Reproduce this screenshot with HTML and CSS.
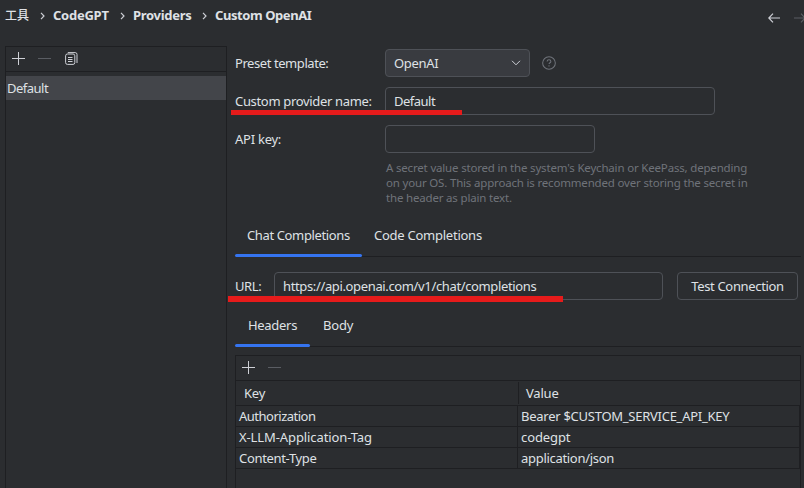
FILE: index.html
```html
<!DOCTYPE html>
<html lang="en">
<head>
<meta charset="utf-8">
<title>Custom OpenAI</title>
<link rel="stylesheet" href="styles.css">
</head>
<body>
<header class="topbar">
  <nav class="crumbs">
    <span class="crumb cjk">工具</span>
    <svg class="sep" viewBox="0 0 5 8"><path d="M1 .8 4 4 1 7.2"/></svg>
    <span class="crumb c2">CodeGPT</span>
    <svg class="sep" viewBox="0 0 5 8"><path d="M1 .8 4 4 1 7.2"/></svg>
    <span class="crumb c3">Providers</span>
    <svg class="sep" viewBox="0 0 5 8"><path d="M1 .8 4 4 1 7.2"/></svg>
    <span class="crumb c4">Custom OpenAI</span>
  </nav>
  <div class="history">
    <svg width="12" height="10" viewBox="0 0 12 10"><path d="M12 5H1M5 .7.8 5 5 9.3"/></svg>
    <svg class="off" width="12" height="10" viewBox="0 0 12 10"><path d="M0 5h11M7 .7 11.2 5 7 9.3"/></svg>
  </div>
</header>
<div class="content">
  <aside class="sidebar">
    <div class="tools">
      <svg width="13" height="13" viewBox="0 0 13 13"><path d="M6.5 0v13M0 6.5h13"/></svg>
      <svg class="off" width="13" height="13" viewBox="0 0 13 13"><path d="M0 6.5h13"/></svg>
      <svg class="copy" width="13" height="13" viewBox="0 0 13 13"><rect x=".6" y="2" width="9.2" height="10.4" rx="1.8"/><path d="M2.8.6h7.4a1.8 1.8 0 0 1 1.8 1.8V11M3 5.5h4.5M3 7.5h4.5M3 9.5h4.5"/></svg>
    </div>
    <div class="item"><span class="t-default">Default</span></div>
  </aside>
  <main class="main">
    <div class="row">
      <label class="label l1">Preset template:</label>
      <div class="combo"><span class="t-openai">OpenAI</span><svg width="10" height="6" viewBox="0 0 10 6"><path d="M1 .8 5 4.8 9 .8"/></svg></div>
      <svg class="help" width="14" height="14" viewBox="0 0 15 15"><circle cx="7.5" cy="7.5" r="6.8"/><path d="M5.5 6c0-1.2.8-2 2-2s2 .8 2 1.8c0 1.4-2 1.4-2 2.9"/><path d="M7.5 10v1.2"/></svg>
    </div>
    <div class="row marked">
      <label class="label l2">Custom provider name:</label>
      <div class="field name"><span class="t-default">Default</span></div>
      <i class="mark m1"></i>
    </div>
    <div class="row">
      <label class="label l3">API key:</label>
      <div class="field key"></div>
    </div>
    <p class="hint">A secret value stored in the system's Keychain or KeePass, depending<br>on your OS. This approach is recommended over storing the secret in<br>the header as plain text.</p>
    <div class="tabs outer"><div class="tab on"><span class="t-chat">Chat Completions</span></div><div class="tab"><span class="t-code">Code Completions</span></div></div>
    <div class="row url marked">
      <label class="t-url">URL:</label>
      <div class="field address"><span class="t-addr">https://api.openai.com/v1/chat/completions</span></div>
      <button class="button"><span class="t-test">Test Connection</span></button>
      <i class="mark m2"></i>
    </div>
    <div class="tabs inner"><div class="tab on"><span class="t-headers">Headers</span></div><div class="tab"><span class="t-body">Body</span></div></div>
    <section class="panel">
      <div class="tools">
        <svg width="13" height="13" viewBox="0 0 13 13"><path d="M6.5 0v13M0 6.5h13"/></svg>
        <svg class="off" width="13" height="13" viewBox="0 0 13 13"><path d="M0 6.5h13"/></svg>
      </div>
      <div class="thead"><div>Key</div><div>Value</div></div>
      <div class="tr"><div><span class="k1">Authorization</span></div><div><span class="v1">Bearer $CUSTOM_SERVICE_API_KEY</span></div></div>
      <div class="tr"><div><span class="k2">X-LLM-Application-Tag</span></div><div><span class="v2">codegpt</span></div></div>
      <div class="tr"><div><span class="k3">Content-Type</span></div><div><span class="v3">application/json</span></div></div>
    </section>
  </main>
</div>
</body>
</html>
```
FILE: styles.css
```css
* { box-sizing: border-box; }
body {
  margin: 0; width: 804px; height: 488px; overflow: hidden;
  background: #2b2d30; color: #dfe1e5;
  font: 13px/18px "Noto Sans", "Noto Sans CJK SC", sans-serif;
  white-space: nowrap;
}
svg { display: block; flex: none; fill: none; stroke: #ced0d6; }
.off { stroke: #5a5d63; }
.topbar { height: 46px; display: flex; justify-content: space-between; overflow: hidden; }
.crumbs { display: flex; align-items: center; height: 30px; padding-left: 5px; font-weight: 700; }
.crumb { flex: none; }
.cjk { width: 24px; font: 500 12px/18px "Noto Sans CJK SC", sans-serif; }
.sep { width: 5px; height: 8px; margin: 1px 8px 0 11px; stroke-width: 1.2; }
.c2 { width: 56px; letter-spacing: -.25px; }
.c3 { width: 58px; letter-spacing: -.3px; }
.c4 { letter-spacing: -.42px; }
.history { display: flex; gap: 14px; padding-top: 13px; width: 36px; flex: none; }
.history svg { stroke-width: 1.2; }
.content { display: flex; height: 442px; }
.sidebar { width: 222px; margin-left: 5px; border: 1px solid #1e1f22; border-bottom: 0; flex: none; }
.tools { height: 25px; display: flex; align-items: center; gap: 13px; padding: 0 0 1px 6px; border-bottom: 1px solid #1e1f22; }
.copy { margin-left: 1px; }
.item { margin-top: 4px; height: 24px; line-height: 24px; padding-left: 1px; background: #43454a; }
.main { width: 566px; margin-left: 8px; padding-top: 3px; flex: none; }
.row { display: flex; height: 28px; margin-bottom: 10px; align-items: center; }
.marked { position: relative; }
.mark { position: absolute; background: #e61b1b; }
.m1 { left: -4px; top: 23px; width: 231px; height: 5px; }
.m2 { left: -7px; top: 24px; width: 335px; height: 6px; }
.label { width: 150px; flex: none; }
.l1 { letter-spacing: -.43px; }
.l2 { letter-spacing: -.33px; }
.l3 { letter-spacing: -.25px; }
.t-default { letter-spacing: -.5px; }
.t-openai { letter-spacing: -.3px; }
.combo { width: 145px; height: 28px; display: flex; align-items: center; justify-content: space-between; padding: 0 8px; border: 1px solid #4e5157; border-radius: 4px; background: #393b40; }
.help { margin-left: 12px; stroke: #6f737a; stroke-width: 1.1; }
.field { height: 28px; border: 1px solid #4e5157; border-radius: 4px; padding: 0 8px; line-height: 26px; }
.name { width: 330px; }
.key { width: 210px; }
.hint { margin: -3px 0 0 151px; height: 45px; font-size: 11.5px; letter-spacing: -.18px; line-height: 15px; color: #6f737a; }
.tabs { display: flex; border-bottom: 1px solid #1e1f22; }
.outer { margin-top: 11px; height: 41px; }
.inner { height: 37px; margin-top: 10px; }
.tab { padding: 0 12px; position: relative; }
.outer .tab { line-height: 38px; }
.inner .tab { line-height: 31px; padding: 0 13px; }
.outer .on { width: 127px; }
.inner .on { width: 75px; }
.on::after { content: ""; position: absolute; left: 0; right: 0; bottom: -1px; height: 3px; border-radius: 2px; background: #3574f0; }
.t-chat { letter-spacing: -.37px; }
.t-code { letter-spacing: -.25px; }
.t-headers { letter-spacing: -.3px; }
.t-body { letter-spacing: -.2px; }
.url { margin: 15px 0 0; }
.t-url { width: 39px; letter-spacing: -.4px; }
.t-addr { letter-spacing: -.36px; }
.t-test { letter-spacing: -.33px; }
.address { width: 389px; }
.button { width: 121px; height: 28px; margin-left: 14px; padding: 0; border: 1px solid #4e5157; border-radius: 4px; background: none; color: inherit; font: inherit; }
.panel { margin-top: 8px; height: 133px; border: 1px solid #1e1f22; border-bottom: 0; }
.thead { display: flex; height: 25px; align-items: center; border-bottom: 1px solid #1e1f22; letter-spacing: -.2px; }
.thead div { height: 22px; line-height: 22px; padding-left: 8px; }
.thead div:first-child { width: 283px; border-right: 1px solid #1e1f22; }
.thead div + div { padding-left: 7px; }
.tr { display: flex; width: 564px; height: 21px; border: solid #1e1f22; border-width: 0 1px 1px 0; line-height: 20px; }
.tr div { padding-left: 3px; }
.tr div:first-child { width: 282px; border-right: 1px solid #1e1f22; }
.k1 { letter-spacing: -.5px; }
.k2, .v2 { letter-spacing: -.1px; }
.k3 { letter-spacing: -.33px; }
.v1 { letter-spacing: -.26px; }
.v3 { letter-spacing: -.3px; }
```
